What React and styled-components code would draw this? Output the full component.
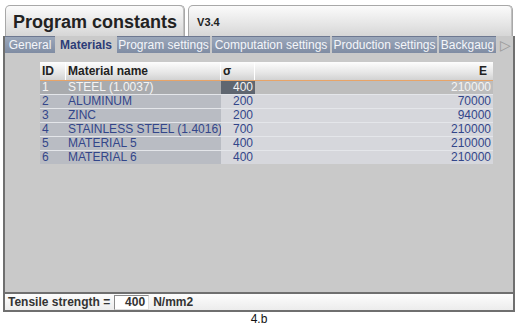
import React from 'react';
import styled, { createGlobalStyle } from 'styled-components';

const GlobalStyle = createGlobalStyle`
  body {
    margin: 0;
    background: #ffffff;
    font-family: Arial, 'Liberation Sans', sans-serif;
  }
`;

const Page = styled.div`
  width: 518px;
  height: 331px;
  display: flex;
  flex-direction: column;
  align-items: center;
  padding-top: 5px;
  box-sizing: border-box;
`;

const Frame = styled.div`
  width: 512px;
  height: 307px;
  display: flex;
  flex-direction: column;
  box-sizing: border-box;
`;

const TitleRow = styled.div`
  display: flex;
  gap: 3px;
  height: 31px;
  padding: 0 2px;
`;

const TitleBox = styled.div`
  flex: ${({ $grow }) => ($grow ? 1 : 'none')};
  display: flex;
  align-items: center;
  padding: ${({ $small }) => ($small ? '2px 8px 0' : '2px 7px 0')};
  border: 1px solid #a8a8a8;
  border-bottom: none;
  border-radius: 5px 5px 0 0;
  background: linear-gradient(#fbfbfb, #e2e2e2 70%, #d6d6d6);
  font-weight: bold;
  font-size: ${({ $small }) => ($small ? '11px' : '18px')};
  color: #222;
  box-shadow: inset -1px 0 0 #c0c0c0;
`;

const Body = styled.div`
  flex: 1;
  display: flex;
  flex-direction: column;
  border-left: 2px solid #6f6f6f;
  border-right: 2px solid #6f6f6f;
  border-bottom: 2px solid #6f6f6f;
  background: #c9c9c9;
`;

const TabBar = styled.div`
  display: flex;
  align-items: stretch;
  gap: 2px;
  height: 17px;
  background: #c9c9c9;
  overflow: hidden;
`;

const Tab = styled.div`
  width: ${({ $w }) => $w}px;
  flex: none;
  display: flex;
  align-items: center;
  justify-content: center;
  font-size: 12px;
  white-space: nowrap;
  overflow: hidden;
  font-weight: ${({ $active }) => ($active ? 'bold' : 'normal')};
  color: ${({ $active }) => ($active ? '#2d3d78' : '#f4f6fa')};
  background: ${({ $active }) =>
    $active ? '#cacaca' : 'linear-gradient(#9ba7ba, #7f8ca3)'};
  border-top: 1px solid ${({ $active }) => ($active ? '#cacaca' : '#6d7890')};
`;

const Arrow = styled.div`
  width: 14px;
  display: flex;
  align-items: center;
  justify-content: center;
  color: #9a9a9a;
  font-size: 14px;
`;

const Content = styled.div`
  flex: 1;
  padding: 9px 20px 0 35px;
`;

const Table = styled.div`
  width: 453px;
  display: flex;
  flex-direction: column;
`;

const Cols = '26px 155px 34px 1fr';

const HeaderRow = styled.div`
  display: grid;
  grid-template-columns: ${Cols};
  height: 18px;
  background: linear-gradient(#fdfdfd, #e6e6e6 60%, #d2d2d2);
`;

const HeadCell = styled.div`
  display: flex;
  align-items: center;
  justify-content: ${({ $right }) => ($right ? 'flex-end' : 'flex-start')};
  padding: 0 ${({ $right }) => ($right ? '6px' : '2px')};
  font-size: 12px;
  font-weight: bold;
  color: #222;
  border-right: 1px solid #ffffff;
  &:last-child { border-right: none; }
`;

const Row = styled.div`
  display: grid;
  grid-template-columns: ${Cols};
  height: ${({ $sel }) => ($sel ? '12px' : '13px')};
  border-top: 1px solid ${({ $sel }) => ($sel ? '#e8a468' : '#e4e6ea')};
  border-bottom: ${({ $sel }) => ($sel ? '1px solid #e8a468' : 'none')};
  box-sizing: content-box;
`;

const Cell = styled.div`
  display: flex;
  align-items: center;
  justify-content: ${({ $right }) => ($right ? 'flex-end' : 'flex-start')};
  padding: 0 2px;
  font-size: 12px;
  line-height: 13px;
  white-space: nowrap;
  color: ${({ $sel }) => ($sel ? '#f4f4f4' : '#33468a')};
  background: ${({ $kind, $sel }) => {
    if ($kind === 'hi') return '#5f6670';
    if ($sel) return $kind === 'dark' ? '#a9abae' : '#bdbdbd';
    return $kind === 'dark' ? '#b9bcc3' : '#d6d7dc';
  }};
`;

const Footer = styled.div`
  height: 16px;
  display: flex;
  align-items: center;
  gap: 4px;
  padding: 0 3px;
  border-top: 2px solid #6f6f6f;
  background: linear-gradient(#fdfdfd, #ececec);
  font-size: 12px;
  font-weight: bold;
  color: #333;
`;

const ValueBox = styled.div`
  width: 30px;
  height: 13px;
  background: #fff;
  border: 1px solid #8a8a8a;
  border-right-color: #ddd;
  border-bottom-color: #ddd;
  display: flex;
  align-items: center;
  justify-content: flex-end;
  padding-right: 3px;
`;

const Caption = styled.div`
  margin-top: 0;
  font-size: 12px;
  color: #111;
`;

const tabs = [
  ['General', 50],
  ['Materials', 58],
  ['Program settings', 93],
  ['Computation settings', 118],
  ['Production settings', 105],
  ['Backgaug', 57],
];

const materials = [
  ['1', 'STEEL (1.0037)', '400', '210000'],
  ['2', 'ALUMINUM', '200', '70000'],
  ['3', 'ZINC', '200', '94000'],
  ['4', 'STAINLESS STEEL (1.4016)', '700', '210000'],
  ['5', 'MATERIAL 5', '400', '210000'],
  ['6', 'MATERIAL 6', '400', '210000'],
];

export default function App() {
  return (
    <Page>
      <GlobalStyle />
      <Frame>
        <TitleRow>
          <TitleBox>Program constants</TitleBox>
          <TitleBox $grow $small>V3.4</TitleBox>
        </TitleRow>
        <Body>
          <TabBar>
            {tabs.map(([t, w], i) => (
              <Tab key={t} $w={w} $active={i === 1}>
                {t}
              </Tab>
            ))}
            <Arrow>▷</Arrow>
          </TabBar>
          <Content>
            <Table>
              <HeaderRow>
                <HeadCell>ID</HeadCell>
                <HeadCell>Material name</HeadCell>
                <HeadCell>σ</HeadCell>
                <HeadCell $right>E</HeadCell>
              </HeaderRow>
              {materials.map((m, i) => {
                const sel = i === 0;
                return (
                  <Row key={m[0]} $sel={sel}>
                    <Cell $kind="dark" $sel={sel}>{m[0]}</Cell>
                    <Cell $kind="dark" $sel={sel}>{m[1]}</Cell>
                    <Cell $right $kind={sel ? 'hi' : 'light'} $sel={sel}>{m[2]}</Cell>
                    <Cell $right $kind="light" $sel={sel}>{m[3]}</Cell>
                  </Row>
                );
              })}
            </Table>
          </Content>
          <Footer>
            Tensile strength =
            <ValueBox>400</ValueBox>
            N/mm2
          </Footer>
        </Body>
      </Frame>
      <Caption>4.b</Caption>
    </Page>
  );
}
